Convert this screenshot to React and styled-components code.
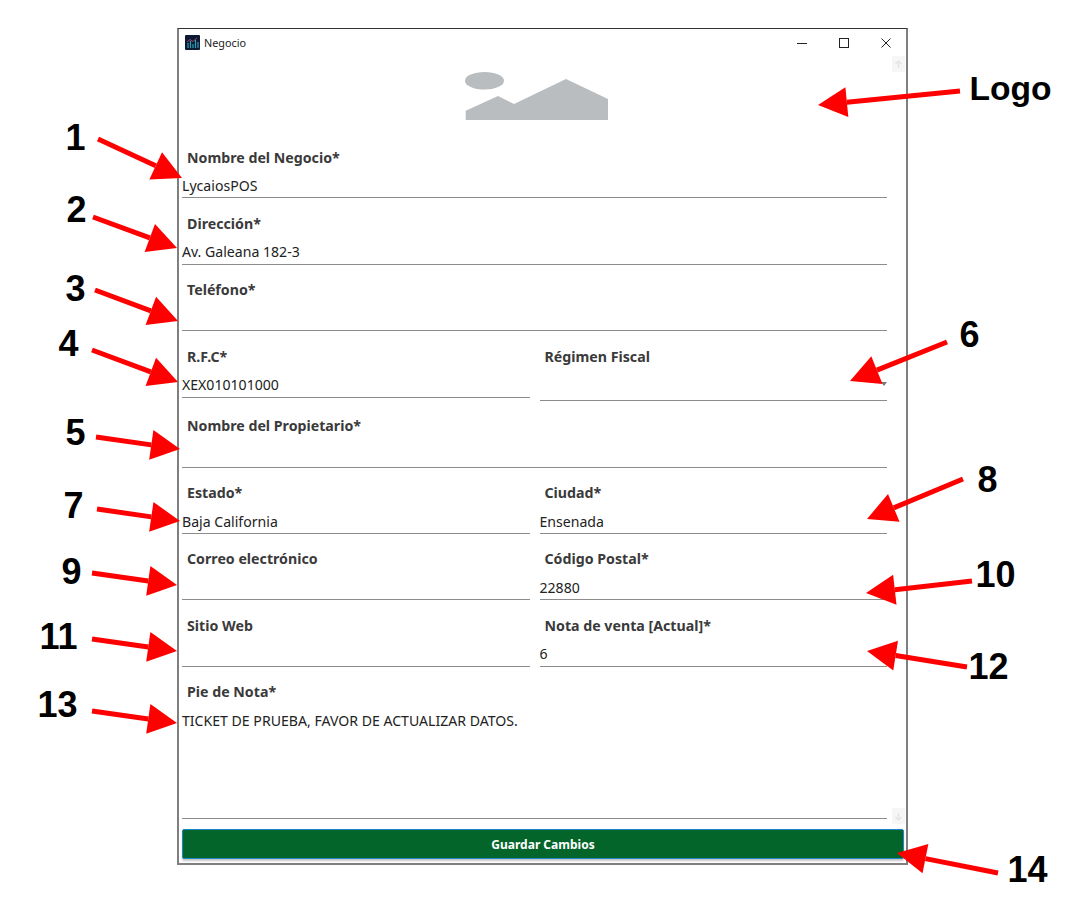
import React from 'react';
import styled, { createGlobalStyle } from 'styled-components';

const GlobalStyle = createGlobalStyle`
  html, body {
    margin: 0;
    padding: 0;
    background: #fff;
  }
  body {
    height: 919px;
    overflow: hidden;
    position: relative;
  }
`;

const Window = styled.div`
  box-sizing: border-box;
  width: 731px;
  height: 837px;
  margin: 28px 0 0 177px;
  background: #fff;
  border: 2px solid #7f7f7f;
  border-top: 1.5px solid #333;
  display: flex;
  flex-direction: column;
  font-family: 'Noto Sans', 'Open Sans', sans-serif;
  position: relative;
`;

const TitleBar = styled.div`
  height: 27px;
  flex: none;
  display: flex;
  align-items: center;
  padding-left: 6px;
  font-size: 10.8px;
  color: #222;
`;

const AppTitle = styled.span`
  margin-left: 4px;
`;

const Controls = styled.div`
  margin-left: auto;
  display: flex;
  align-items: center;
  gap: 32px;
  padding-right: 15px;
  svg {
    display: block;
  }
`;

const LogoArea = styled.div`
  flex: none;
  height: 76px;
  padding: 14.5px 11px 0 0;
  box-sizing: border-box;
  display: flex;
  justify-content: center;
  align-items: flex-start;
`;

const Form = styled.div`
  flex: 1;
  display: flex;
  flex-direction: column;
  padding: 0 19px 0 3px;
`;

const Row = styled.div`
  display: grid;
  grid-template-columns: ${({ $columns }) => ($columns === 2 ? '1fr 1fr' : '1fr')};
  column-gap: 10px;
  align-items: start;
`;

const Field = styled.div`
  box-sizing: border-box;
  height: ${({ $height }) => $height || 66.4}px;
  padding-top: 15.5px;
  display: flex;
  flex-direction: column;
  border-bottom: 1px solid #8c8c8c;
  position: relative;
`;

const Label = styled.div`
  height: 20px;
  line-height: 20px;
  margin-left: 5px;
  font-size: 14.2px;
  font-weight: 700;
  color: #3a3a3a;
`;

const Value = styled.div`
  height: 20px;
  line-height: 20px;
  margin-top: 8.5px;
  font-size: 14.1px;
  color: #222;
`;

const Caret = styled.span`
  position: absolute;
  right: 0;
  bottom: 14px;
  width: 0;
  height: 0;
  border-left: 3px solid transparent;
  border-right: 3px solid transparent;
  border-top: 4px solid #777;
`;

const ScrollButton = styled.div`
  position: absolute;
  left: 713px;
  top: ${({ $top }) => $top}px;
  width: 13px;
  height: 16px;
  background: #f6f6f6;
  display: flex;
  align-items: center;
  justify-content: center;
`;

const SaveButton = styled.button`
  box-sizing: border-box;
  display: block;
  flex: none;
  width: 722px;
  height: 30px;
  margin: 10px 0 0 0;
  padding: 2px 0 0;
  background: #03652a;
  border: 1px solid #1c86c8;
  border-radius: 2px;
  box-shadow: 0 2px 2px rgba(0, 0, 0, 0.22);
  color: #fff;
  font-family: 'Noto Sans', 'Open Sans', sans-serif;
  font-size: 12px;
  font-weight: 700;
`;

const ArrowLayer = styled.svg`
  position: absolute;
  left: 0;
  top: 0;
  width: 1089px;
  height: 919px;
  pointer-events: none;
`;

const Callout = styled.div`
  position: absolute;
  left: ${({ $x }) => $x}px;
  top: ${({ $y }) => $y}px;
  transform: translate(-50%, -50%);
  font-family: 'Liberation Sans', Arial, sans-serif;
  font-weight: 700;
  font-size: ${({ $size }) => $size || 36}px;
  line-height: 1;
  color: #000;
  white-space: nowrap;
`;

const arrows = [
  [960, 91, 818, 105],
  [98, 139, 182, 178],
  [93, 217, 177, 248],
  [95, 290, 178, 321],
  [92, 350, 178, 382],
  [96, 437, 180, 449],
  [947, 342, 850, 381],
  [97, 509, 180, 521],
  [963, 479, 867, 519],
  [92, 573, 177, 585],
  [972, 581, 866, 593],
  [92, 639, 177, 651],
  [967, 667, 867, 651],
  [92, 711, 177, 723],
  [998, 873, 897, 853],
];

const callouts = [
  ['Logo', 1010.5, 88.5, 33.6],
  ['1', 75.5, 138],
  ['2', 76.5, 210],
  ['3', 75.5, 289],
  ['4', 68.5, 344],
  ['5', 75.5, 433],
  ['6', 969.5, 335],
  ['7', 73.5, 506],
  ['8', 987.5, 480],
  ['9', 71.5, 572],
  ['10', 995.5, 575],
  ['11', 58.5, 637],
  ['12', 988.5, 667],
  ['13', 57.5, 705],
  ['14', 1027.5, 870],
];

function Arrow({ from }) {
  const [x1, y1, x2, y2] = from;
  const len = Math.hypot(x2 - x1, y2 - y1);
  const ux = (x2 - x1) / len;
  const uy = (y2 - y1) / len;
  const bx = x2 - ux * 29;
  const by = y2 - uy * 29;
  const head = [
    [x2, y2],
    [bx - uy * 15, by + ux * 15],
    [bx + uy * 15, by - ux * 15],
  ]
    .map((p) => p.join(','))
    .join(' ');
  return (
    <g>
      <line x1={x1} y1={y1} x2={bx} y2={by} stroke="#ff0000" strokeWidth="5" />
      <polygon points={head} fill="#ff0000" />
    </g>
  );
}

function AppIcon() {
  return (
    <svg width="15" height="15" viewBox="0 0 15 15">
      <rect width="15" height="15" rx="1" fill="#0c1a33" />
      <path d="M3 13V8M5.5 13V6M8 13V9M10.5 13V5M13 13V7" stroke="#2f9fb0" strokeWidth="1.2" />
      <path d="M2 7L5 4.5L8 6.5L12 3" stroke="#c0567e" strokeWidth="0.8" fill="none" />
    </svg>
  );
}

function WindowControls() {
  return (
    <Controls>
      <svg width="10" height="10" viewBox="0 0 10 10">
        <path d="M0 5.5H10" stroke="#222" strokeWidth="1" />
      </svg>
      <svg width="10" height="10" viewBox="0 0 10 10">
        <rect x="0.5" y="0.5" width="9" height="9" fill="none" stroke="#222" strokeWidth="1" />
      </svg>
      <svg width="10" height="10" viewBox="0 0 10 10">
        <path d="M0.5 0.5L9.5 9.5M9.5 0.5L0.5 9.5" stroke="#222" strokeWidth="1" />
      </svg>
    </Controls>
  );
}

function LogoPlaceholder() {
  return (
    <svg width="144" height="50" viewBox="0 0 144 50">
      <ellipse cx="19.5" cy="9.7" rx="19.5" ry="8.8" fill="#b9bdbf" />
      <polygon points="0.7,49 0.7,39.7 33,25 49,33 101,8 143,28 143,49" fill="#b9bdbf" />
    </svg>
  );
}

function ScrollArrow({ up }) {
  return (
    <svg width="9" height="9" viewBox="0 0 9 9">
      <path
        d={up ? 'M4.5 8V1M1.5 4L4.5 1L7.5 4' : 'M4.5 1V8M1.5 5L4.5 8L7.5 5'}
        stroke="#e2e2e2"
        strokeWidth="1.2"
        fill="none"
      />
    </svg>
  );
}

function TextField({ label, value, height, select }) {
  return (
    <Field $height={height}>
      <Label>{label}</Label>
      <Value>{value}</Value>
      {select && <Caret />}
    </Field>
  );
}

export default function App() {
  return (
    <>
      <GlobalStyle />
      <Window>
        <TitleBar>
          <AppIcon />
          <AppTitle>Negocio</AppTitle>
          <WindowControls />
        </TitleBar>
        <LogoArea>
          <LogoPlaceholder />
        </LogoArea>
        <ScrollButton $top={27}>
          <ScrollArrow up />
        </ScrollButton>
        <ScrollButton $top={779}>
          <ScrollArrow />
        </ScrollButton>
        <Form>
          <TextField label="Nombre del Negocio*" value="LycaiosPOS" />
          <TextField label="Dirección*" value="Av. Galeana 182-3" />
          <TextField label="Teléfono*" />
          <Row $columns={2}>
            <TextField label="R.F.C*" value="XEX010101000" />
            <TextField label="Régimen Fiscal" height={69.6} select />
          </Row>
          <Row $columns={1}>
            <TextField label="Nombre del Propietario*" height={66.8} />
          </Row>
          <Row $columns={2}>
            <TextField label="Estado*" value="Baja California" />
            <TextField label="Ciudad*" value="Ensenada" />
          </Row>
          <Row $columns={2}>
            <TextField label="Correo electrónico" />
            <TextField label="Código Postal*" value="22880" />
          </Row>
          <Row $columns={2}>
            <TextField label="Sitio Web" />
            <TextField label="Nota de venta [Actual]*" value="6" />
          </Row>
          <TextField label="Pie de Nota*" value="TICKET DE PRUEBA, FAVOR DE ACTUALIZAR DATOS." height={152} />
          <SaveButton>Guardar Cambios</SaveButton>
        </Form>
      </Window>
      <ArrowLayer viewBox="0 0 1089 919">
        {arrows.map((a) => (
          <Arrow key={a.join('-')} from={a} />
        ))}
      </ArrowLayer>
      {callouts.map(([text, x, y, size]) => (
        <Callout key={text} $x={x} $y={y} $size={size}>
          {text}
        </Callout>
      ))}
    </>
  );
}
